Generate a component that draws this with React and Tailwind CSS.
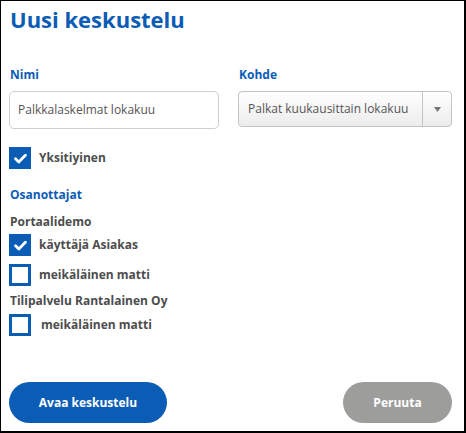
import React from "react";

function Check({ checked }) {
  if (checked) {
    return (
      <span className="flex h-[22px] w-[22px] shrink-0 items-center justify-center bg-[#0b5cb5]">
        <svg width="13" height="11" viewBox="0 0 13 11" fill="none">
          <path d="M1.6 5.8 L4.8 8.9 L11.4 2.2" stroke="white" strokeWidth="2.8" strokeLinecap="round" strokeLinejoin="round" />
        </svg>
      </span>
    );
  }
  return <span className="block h-[22px] w-[22px] shrink-0 border-[3px] border-[#0b5cb5] bg-white" />;
}

function Row({ checked, label, extra = "" }) {
  return (
    <div className="flex items-center">
      <Check checked={checked} />
      <span className={`ml-[8px] text-[12px] font-bold text-[#4d4d4d] ${extra}`}>{label}</span>
    </div>
  );
}

export default function App() {
  return (
    <div
      className="relative h-[433px] w-[466px] border-l border-t border-r-2 border-b-2 border-black bg-white"
      style={{ fontFamily: '"Open Sans", sans-serif' }}
    >
      <div className="flex h-full flex-col pl-[8px] pr-[12px]">
        <h1 className="mt-[3px] pl-[1px] text-[22px] font-bold leading-[30px] text-[#0b5cb5]">Uusi keskustelu</h1>

        <div className="mt-[32px] flex">
          <div className="w-[210px]">
            <div className="pl-[1px] text-[12px] font-bold leading-[18px] text-[#0b5cb5]">Nimi</div>
            <div className="mt-[7px] flex h-[38px] items-center rounded-[5px] border border-[#cfcfcf] bg-white px-[8px] text-[12px] text-[#555]">
              Palkkalaskelmat lokakuu
            </div>
          </div>
          <div className="ml-[19px] w-[214px]">
            <div className="pl-[1px] text-[12px] font-bold leading-[18px] text-[#0b5cb5]">Kohde</div>
            <div className="mt-[7px] flex h-[36px] rounded-[4px] border border-[#c4c4c4] bg-gradient-to-b from-white to-[#ececec]">
              <div className="flex flex-1 items-center pl-[9px] text-[12px] text-[#555]">Palkat kuukausittain lokakuu</div>
              <div className="flex w-[29px] items-center justify-center border-l border-[#c4c4c4]">
                <svg width="7" height="5" viewBox="0 0 7 5">
                  <path d="M0 0 H7 L3.5 5 Z" fill="#777" />
                </svg>
              </div>
            </div>
          </div>
        </div>

        <div className="mt-[18px]">
          <Row checked label="Yksitiyinen" />
        </div>

        <div className="mt-[17px] pl-[1px] text-[12px] font-bold leading-[18px] text-[#0b5cb5]">Osanottajat</div>
        <div className="mt-[9px] pl-[1px] text-[12px] font-bold leading-[18px] text-[#4d4d4d]">Portaalidemo</div>
        <div className="mt-[3px] flex flex-col gap-[8px]">
          <Row checked label="käyttäjä Asiakas" />
          <Row checked={false} label="meikäläinen matti" />
        </div>
        <div className="mt-[6px] pl-[1px] text-[12px] font-bold leading-[18px] text-[#4d4d4d]">Tilipalvelu Rantalainen Oy</div>
        <div className="mt-[4px]">
          <Row checked={false} label="meikäläinen matti" extra="ml-[10px]" />
        </div>

        <div className="mt-auto mb-[8px] flex items-center justify-between">
          <button className="h-[41px] w-[158px] rounded-full bg-[#0b5cb5] text-[12px] font-bold text-white">Avaa keskustelu</button>
          <button className="h-[41px] w-[109px] rounded-full bg-[#9d9e9c] text-[12px] font-bold text-white">Peruuta</button>
        </div>
      </div>
    </div>
  );
}
